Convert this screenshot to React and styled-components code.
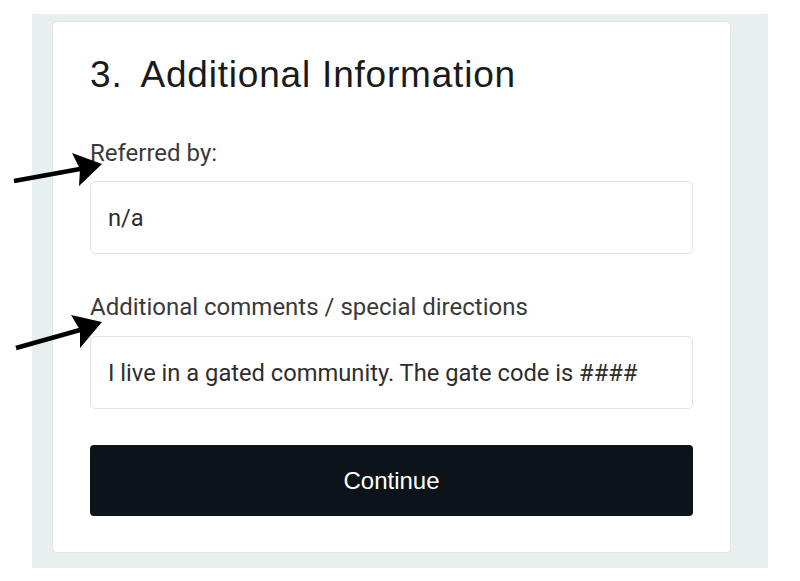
import React from "react";
import styled, { createGlobalStyle } from "styled-components";

const Global = createGlobalStyle`
  html, body {
    margin: 0;
    padding: 0;
    background: #ffffff;
  }
  * {
    box-sizing: border-box;
  }
`;

const Page = styled.div`
  width: 800px;
  height: 581px;
  padding: 14px 32px 13px 32px;
  position: relative;
`;

const Panel = styled.div`
  background: #e8f0ef;
  height: 554px;
  padding: 8px 38px 16px 21px;
`;

const Card = styled.div`
  background: #ffffff;
  height: 100%;
  border-radius: 4px;
  box-shadow: 0 0 2px rgba(0, 0, 0, 0.12);
  padding: 33px 37px 0 37px;
  display: flex;
  flex-direction: column;
`;

const Heading = styled.h2`
  margin: 0 0 44px 0;
  font-family: "Liberation Sans", Arial, sans-serif;
  font-weight: 400;
  font-size: 37px;
  line-height: 40px;
  letter-spacing: 0.8px;
  color: #1a1a1a;
  display: flex;
  gap: 18px;
`;

const Field = styled.div`
  display: flex;
  flex-direction: column;
  gap: ${(p) => p.$inner || "14px"};
  margin-bottom: ${(p) => p.$gap || "0px"};
`;

const Label = styled.label`
  font-family: Roboto, "Liberation Sans", sans-serif;
  font-size: 24px;
  line-height: 28px;
  color: #3a3a3a;
`;

const Input = styled.div`
  height: 73px;
  border: 1px solid #e2e4e6;
  border-radius: 5px;
  padding: 0 17px;
  display: flex;
  align-items: center;
  font-family: Roboto, "Liberation Sans", sans-serif;
  font-size: 23.7px;
  color: #2e2e2e;
`;

const Button = styled.button`
  height: 71px;
  border: none;
  border-radius: 4px;
  background: #0d1419;
  color: #ffffff;
  font-family: "Liberation Sans", Arial, sans-serif;
  font-size: 24px;
  cursor: pointer;
`;

const Arrow = styled.svg`
  position: absolute;
  left: 0;
  top: 0;
  overflow: visible;
  pointer-events: none;
`;

// tail, tip and the two back corners of the head, in page pixels
function PointerArrow({ tail, tip, c1, c2, notch }) {
  return (
    <Arrow width="120" height="581">
      <line
        x1={tail[0]}
        y1={tail[1]}
        x2={notch[0]}
        y2={notch[1]}
        stroke="#000"
        strokeWidth="4.5"
      />
      <path
        d={`M${tip[0]} ${tip[1]} L${c1[0]} ${c1[1]} L${notch[0]} ${notch[1]} L${c2[0]} ${c2[1]} Z`}
        fill="#000"
      />
    </Arrow>
  );
}

export default function App() {
  return (
    <>
      <Global />
      <Page>
        <Panel>
          <Card>
            <Heading>
              <span>3.</span>
              <span>Additional Information</span>
            </Heading>
            <Field $gap="39px">
              <Label>Referred by:</Label>
              <Input>n/a</Input>
            </Field>
            <Field $gap="36px" $inner="15px">
              <Label>Additional comments / special directions</Label>
              <Input>I live in a gated community. The gate code is ####</Input>
            </Field>
            <Button>Continue</Button>
          </Card>
        </Panel>
        <PointerArrow
          tail={[14, 181]}
          tip={[102, 164]}
          c1={[72, 153]}
          c2={[79, 186]}
          notch={[80, 169]}
        />
        <PointerArrow
          tail={[16, 348]}
          tip={[102, 322]}
          c1={[71, 315]}
          c2={[80, 348]}
          notch={[80, 330]}
        />
      </Page>
    </>
  );
}
